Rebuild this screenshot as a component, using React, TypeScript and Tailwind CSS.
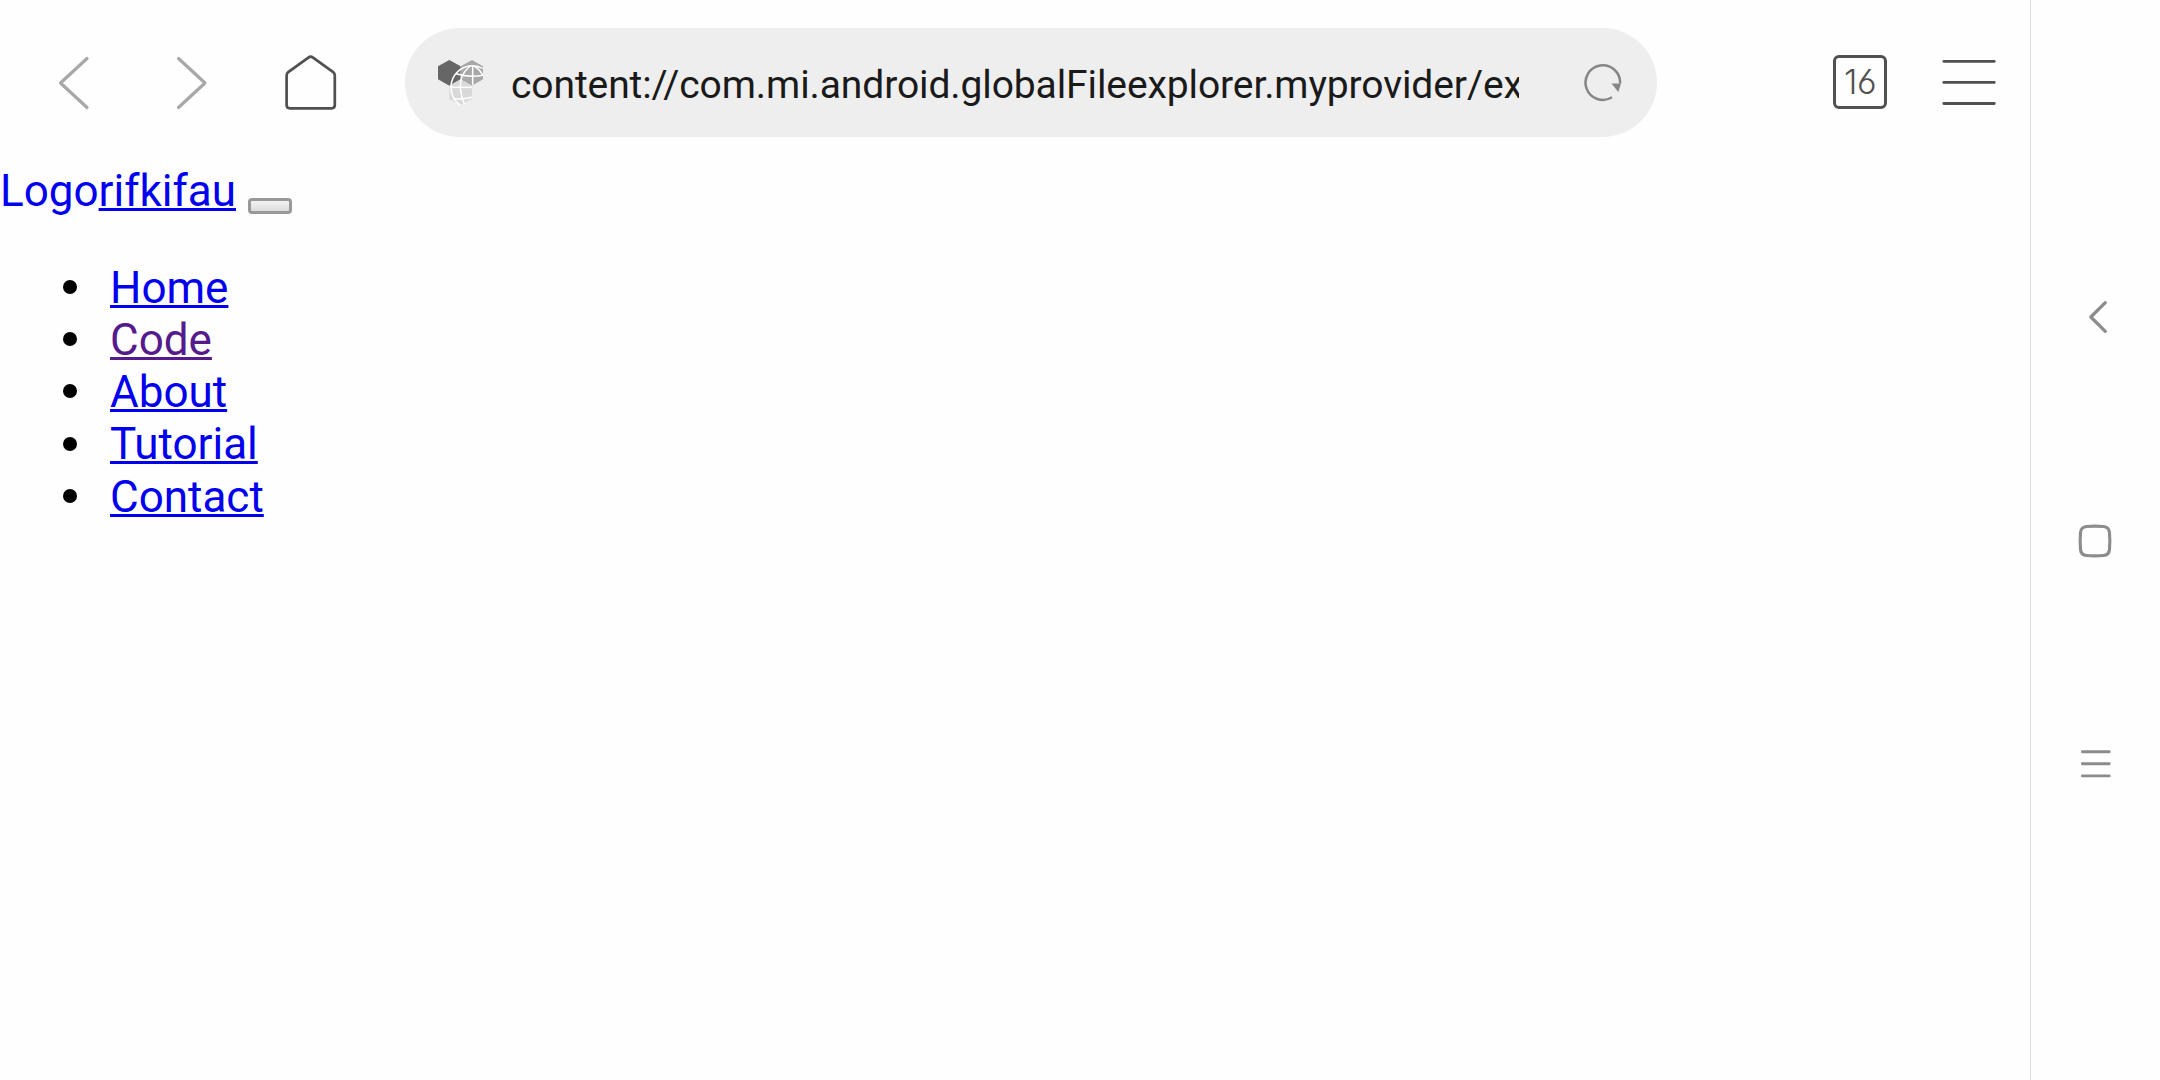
import type { ReactNode } from "react";

const links = [
  { label: "Home", visited: false },
  { label: "Code", visited: true },
  { label: "About", visited: false },
  { label: "Tutorial", visited: false },
  { label: "Contact", visited: false },
];

function Stroke({ className, viewBox, children }: { className: string; viewBox: string; children: ReactNode }) {
  return (
    <svg className={className} viewBox={viewBox} fill="none" stroke="currentColor" strokeLinecap="round" strokeLinejoin="round">
      {children}
    </svg>
  );
}

function SiteIcon() {
  return (
    <svg className="h-[45px] w-[45px] shrink-0" viewBox="0 0 135 135" fill="none">
      <path d="M34 0L68 19V58L34 77L0 58V19Z" fill="#666" />
      <path d="M102 0L135 19V58L102 77L68 58V19Z" fill="#a8a8a8" />
      <path d="M68 58L102 77V117L68 135L34 117V77Z" fill="#d9d9d9" />
      <g stroke="#fff" strokeWidth="4.5">
        <path d="M134 25A65 65 0 0 0 104 17A65 65 0 0 0 71 138" />
        <path d="M104 17V75" />
        <path d="M97 18C74 36 64 62 68 92Q70 112 79 132" />
        <path d="M108 18Q126 28 134 46" />
        <path d="M54 41Q94 53 135 46" />
        <path d="M39 82H102" />
        <path d="M45 116Q75 120 102 112" />
      </g>
    </svg>
  );
}

function Toolbar() {
  return (
    <header className="flex h-[165px] items-start text-[#505050]">
      <Stroke className="ml-[58px] mt-[56px] h-[54px] w-[32px] text-[#a8a8a8]" viewBox="0 0 32 54">
        <path d="M29 2.5L2.5 27L29 51.5" strokeWidth="3.2" />
      </Stroke>
      <Stroke className="ml-[86px] mt-[56px] h-[54px] w-[32px] text-[#a8a8a8]" viewBox="0 0 32 54">
        <path d="M2.5 2.5L29 27L2.5 51.5" strokeWidth="3.2" />
      </Stroke>
      <Stroke className="ml-[76px] mt-[54px] h-[58px] w-[54px]" viewBox="0 0 54 58">
        <path
          d="M24.7 3.4Q26.7 1.8 28.7 3.4L49.2 18.2Q50.8 19.4 50.8 21.6V51Q50.8 54.3 47.6 54.3H5.8Q2.6 54.3 2.6 51V21.6Q2.6 19.4 4.2 18.2Z"
          strokeWidth="2.7"
        />
      </Stroke>
      <div className="ml-[67px] mt-[28px] flex h-[109px] w-[1252px] items-center rounded-full bg-[#eee] pl-[33px]">
        <SiteIcon />
        <div className="ml-[28px] mt-[4px] w-[1008px] overflow-hidden whitespace-nowrap text-[39px] leading-[52px] tracking-[-0.1px] text-[#1a1a1a]">
          content://com.mi.android.globalFileexplorer.myprovider/ex
        </div>
        <Stroke className="ml-[64px] h-[40px] w-[40px] text-[#868686]" viewBox="0 0 40 40">
          <path d="M37.1 20.5A17.3 17.3 0 1 0 29 34.3" strokeWidth="2.5" strokeLinecap="butt" />
          <path d="M28.5 20.5H38L35.3 29Z" fill="currentColor" stroke="none" />
        </Stroke>
      </div>
      <div className="ml-[176px] mt-[55px] flex h-[54px] w-[54px] items-center justify-center rounded-[6px] border-[3px] border-[#505050] pb-px font-['Inter'] text-[34px] font-light leading-none tracking-[-0.5px] [font-feature-settings:'ss01','cv03']">
        16
      </div>
      <Stroke className="ml-[54px] mt-[58px] h-[48px] w-[56px]" viewBox="0 0 56 48">
        <path d="M2.8 3.3H53.3M2.8 24.4H53.3M2.8 45.5H53.3" strokeWidth="2.8" />
      </Stroke>
    </header>
  );
}

function SystemBar() {
  return (
    <aside className="flex w-[130px] flex-col items-start border-l border-[#dfdfdf] text-[#8c8c8c]">
      <Stroke className="ml-[57px] mt-[300px] h-[34px] w-[20px]" viewBox="0 0 20 34">
        <path d="M17.3 2.7L2.8 17L17.3 31.3" strokeWidth="3.2" />
      </Stroke>
      <Stroke className="ml-[47px] mt-[190px] h-[34px] w-[34px]" viewBox="0 0 34 34">
        <path d="M8.5 2.5Q17 1.8 25.5 2.5Q31 3 31.5 8.5Q32.2 17 31.5 25.5Q31 31 25.5 31.5Q17 32.2 8.5 31.5Q3 31 2.5 25.5Q1.8 17 2.5 8.5Q3 3 8.5 2.5Z" strokeWidth="3.1" />
      </Stroke>
      <Stroke className="ml-[49px] mt-[191px] h-[30px] w-[32px]" viewBox="0 0 32 30">
        <path d="M2.4 2.7H29.2M2.4 14.8H29.2M2.4 26.9H29.2" strokeWidth="2.9" />
      </Stroke>
    </aside>
  );
}

export default function App() {
  return (
    <div className="flex h-[1080px] w-[2160px] overflow-hidden bg-[#fefefe] font-['Roboto',sans-serif]">
      <div className="flex-1">
        <Toolbar />
        <main className="text-[44px] leading-[52.15px] underline-offset-2">
          <nav>
            <div className="flex h-[97px] items-start">
              <a className="text-[#0000ee]">Logo</a>
              <a className="text-[#0000ee] underline decoration-[3px]">rifkifau</a>
              <button className="ml-[12px] mt-[33px] h-[16px] w-[44px] rounded-[4px] border-[3px] border-[#999] bg-linear-to-b from-[#f2f2f2] to-[#dcdcdc]" />
            </div>
            <ul>
              {links.map(({ label, visited }) => (
                <li key={label} className="flex items-center pl-[63px]">
                  <span className="mr-[33px] mt-[-2px] h-[14px] w-[14px] rounded-full bg-black" />
                  <a className={visited ? "text-[#551a8b] underline decoration-[3px]" : "text-[#0000ee] underline decoration-[3px]"}>
                    {label}
                  </a>
                </li>
              ))}
            </ul>
          </nav>
        </main>
      </div>
      <SystemBar />
    </div>
  );
}
